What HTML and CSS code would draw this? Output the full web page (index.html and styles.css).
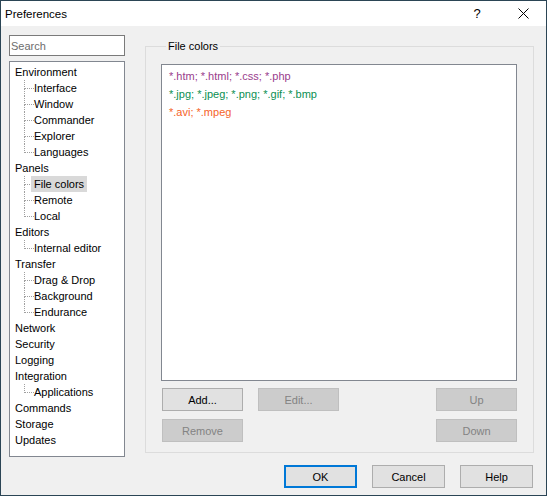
FILE: index.html
```html
<!DOCTYPE html>
<html lang="en">
<head>
    <meta charset="UTF-8">
    <title>Preferences</title>
    <link rel="stylesheet" href="styles.css">
</head>
<body>
    <div class="window">
        <div class="titlebar">
            <span class="title">Preferences</span>
            <span class="cap help">?</span>
            <span class="cap close">
                <svg width="11" height="11" viewBox="0 0 11 11"><path d="M0.5 0.5L10.5 10.5M10.5 0.5L0.5 10.5" stroke="#000" stroke-width="1" fill="none"/></svg>
            </span>
        </div>
        <div class="body">
            <div class="main">
                <div class="side">
                    <input class="search" type="text" placeholder="Search">
                    <ul class="tree">
                        <li><span>Environment</span>
                            <ul>
                                <li><span>Interface</span></li>
                                <li><span>Window</span></li>
                                <li><span>Commander</span></li>
                                <li><span>Explorer</span></li>
                                <li><span>Languages</span></li>
                            </ul>
                        </li>
                        <li><span>Panels</span>
                            <ul>
                                <li><span class="sel">File colors</span></li>
                                <li><span>Remote</span></li>
                                <li><span>Local</span></li>
                            </ul>
                        </li>
                        <li><span>Editors</span>
                            <ul>
                                <li><span>Internal editor</span></li>
                            </ul>
                        </li>
                        <li><span>Transfer</span>
                            <ul>
                                <li><span>Drag &amp; Drop</span></li>
                                <li><span>Background</span></li>
                                <li><span>Endurance</span></li>
                            </ul>
                        </li>
                        <li><span>Network</span></li>
                        <li><span>Security</span></li>
                        <li><span>Logging</span></li>
                        <li><span>Integration</span>
                            <ul>
                                <li><span>Applications</span></li>
                            </ul>
                        </li>
                        <li><span>Commands</span></li>
                        <li><span>Storage</span></li>
                        <li><span>Updates</span></li>
                    </ul>
                </div>
                <fieldset class="group">
                    <legend>File colors</legend>
                    <div class="list">
                        <div class="c-web">*.htm; *.html; *.css; *.php</div>
                        <div class="c-img">*.jpg; *.jpeg; *.png; *.gif; *.bmp</div>
                        <div class="c-vid">*.avi; *.mpeg</div>
                    </div>
                    <div class="btn-row first">
                        <button class="btn">Add...</button>
                        <button class="btn" disabled>Edit...</button>
                        <button class="btn push" disabled>Up</button>
                    </div>
                    <div class="btn-row">
                        <button class="btn" disabled>Remove</button>
                        <button class="btn push" disabled>Down</button>
                    </div>
                </fieldset>
            </div>
            <div class="footer">
                <button class="btn small default">OK</button>
                <button class="btn small">Cancel</button>
                <button class="btn small">Help</button>
            </div>
        </div>
    </div>
</body>
</html>
```

FILE: styles.css
```css
*{
    box-sizing: border-box;
}
body{
    margin: 0;
    font-family: "Liberation Sans", Arial, sans-serif;
    font-size: 11px;
    color: #000;
}
.window{
    width: 547px;
    height: 496px;
    border: 1px solid #2b4555;
    display: flex;
    flex-direction: column;
}
.titlebar{
    height: 25px;
    background-color: #fff;
    display: flex;
    align-items: center;
}
.title{
    padding-left: 4px;
    font-size: 11.5px;
    flex: 1;
}
.cap{
    width: 46px;
    height: 25px;
    display: flex;
    justify-content: center;
    align-items: center;
}
.help{
    font-size: 13px;
}
.close svg{
    display: block;
}
.body{
    flex: 1;
    background-color: #f0f0f0;
    padding: 9px 12px 0 8px;
}
.main{
    display: flex;
    height: 422px;
}
.side{
    width: 116px;
    display: flex;
    flex-direction: column;
}
.search{
    height: 21px;
    border: 1px solid #7a7a7a;
    padding: 0 1px;
    font-family: inherit;
    font-size: 11px;
    outline: none;
}
.search::placeholder{
    color: #6d6d6d;
}
.tree{
    flex: 1;
    margin: 5px 0 0 0;
    border: 1px solid #828790;
    background-color: #fff;
    list-style: none;
    padding: 2px 0 0 2px;
}
.tree ul{
    list-style: none;
    margin: 0;
    padding: 0 0 0 19px;
}
.tree li{
    line-height: 16px;
}
.tree span{
    display: inline-block;
    padding: 0 3px;
    position: relative;
    white-space: nowrap;
}
.tree ul li{
    position: relative;
}
.tree ul li::before{
    content: "";
    position: absolute;
    left: -7px;
    top: 0;
    width: 9px;
    height: 8px;
    box-sizing: content-box;
    border-left: 1px dotted #a0a0a0;
    border-bottom: 1px dotted #a0a0a0;
}
.tree ul li:not(:last-child)::after{
    content: "";
    position: absolute;
    left: -7px;
    top: 8px;
    bottom: 0;
    border-left: 1px dotted #a0a0a0;
}
.tree .sel{
    background-color: #d9d9d9;
}
.group{
    margin: 5px 0 0 20px;
    width: 389px;
    height: 413px;
    min-width: 0;
    border: 1px solid #dcdcdc;
    padding: 11px 16px 0 15px;
}
.group legend{
    margin-left: 5px;
    padding: 0 2px;
    line-height: 13px;
}
.list{
    height: 317px;
    border: 1px solid #828790;
    background-color: #fff;
    padding: 2px 7px;
    line-height: 18px;
}
.c-web{ color: #993d8c; }
.c-img{ color: #0b8f52; }
.c-vid{ color: #f5642a; }
.btn-row{
    display: flex;
    gap: 15px;
    margin-top: 8px;
    padding-left: 1px;
}
.btn-row.first{
    margin-top: 7px;
}
.btn{
    width: 81px;
    height: 23px;
    border: 1px solid #adadad;
    background-color: #e1e1e1;
    font-family: inherit;
    font-size: 11px;
    color: #000;
    padding: 0;
}
.btn:disabled{
    background-color: #cccccc;
    border-color: #bfbfbf;
    color: #838383;
}
.push{
    margin-left: auto;
}
.footer{
    display: flex;
    justify-content: flex-end;
    gap: 15px;
    margin-top: 8px;
    padding-right: 1px;
}
.btn.small{
    width: 73px;
}
.btn.default{
    border: 2px solid #0078d7;
}
```
